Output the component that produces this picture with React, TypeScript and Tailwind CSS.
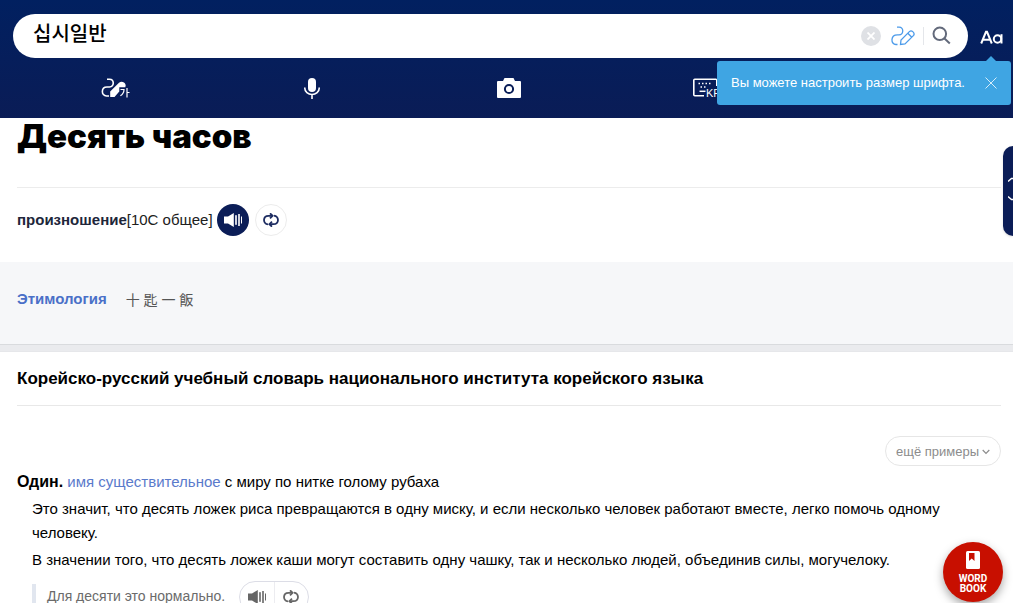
import React from "react";

type IconProps = { className?: string };

function SpeakerIcon({ className }: IconProps) {
  return (
    <svg viewBox="0 0 18 14" className={className} fill="currentColor" aria-hidden="true">
      <path d="M0 3.500h4L9.800 0v14L4 10.500H0z" />
      <rect x="11.200" y="2.200" width="1.600" height="9.600" />
      <rect x="14.200" y="1" width="1.600" height="12" />
      <rect x="17" y="3.500" width="1" height="7" />
    </svg>
  );
}

function RepeatIcon({ className }: IconProps) {
  return (
    <svg viewBox="0 0 16 14" className={className} fill="none" stroke="currentColor" strokeWidth="1.800" aria-hidden="true">
      <path d="M5 11.400A4.700 4.700 0 0 1 1 7Q1.200 2.800 5.500 2.800H9" />
      <path d="M11 2.600A4.700 4.700 0 0 1 15 7Q14.800 11.200 10.500 11.200H7" />
      <path d="M7 0.300 9.600 2.800 7 5.300" />
      <path d="M9 8.700 6.400 11.200 9 13.700" />
    </svg>
  );
}

function HandwritingIcon() {
  return (
    <svg viewBox="0 0 29 20" className="h-5 w-[29px]" aria-hidden="true">
      <path d="M6 1.200h2.500C13.500 1.200 13.500 9 8.500 9H6C-0.200 9 0 18 5.500 18H8" fill="none" stroke="#fff" strokeWidth="1.600" />
      <path d="M9.200 19v-5.500L18 4.800Q20.500 2.800 23 4.600 25.500 6.500 24.300 9.300H18.300v4.200L13.500 19z" fill="#fff" />
      <path d="M19.500 11.500h3.500q0 4-3.600 6.300M26 10v9.500M26 14.500h2.500" fill="none" stroke="#fff" strokeWidth="1.200" />
    </svg>
  );
}

function PenIcon() {
  return (
    <svg viewBox="0 0 24 20" className="h-5 w-6" fill="none" stroke="#4c9bea" strokeWidth="1.300" aria-hidden="true">
      <path d="M6 1.200h2C13.500 1.200 12.500 8.800 8 8.800H6.500C-0.800 8.800-0.500 18.500 5 18.500h1.500" />
      <path d="M9.500 18.500 10 14l8.600-8.600q1.600-1.200 3.400.5t.6 3.500L14 18z" />
      <path d="m16.800 7.200 4 4" />
    </svg>
  );
}

function MicIcon() {
  return (
    <svg viewBox="0 0 18 22" className="h-[22px] w-[18px]" aria-hidden="true">
      <rect x="5" y="1" width="8" height="14" rx="4" fill="#fff" />
      <path d="M1.800 10.500v.7a7.200 6.300 0 0 0 14.400 0v-.7M9 17.500V22" fill="none" stroke="#fff" strokeWidth="1.600" />
    </svg>
  );
}

function CameraIcon() {
  return (
    <svg viewBox="0 0 24 20" className="h-5 w-6" aria-hidden="true">
      <path d="M1 3h5l1.500-3h9L18 3h5q1 0 1 1v15q0 1-1 1H1q-1 0-1-1V4q0-1 1-1z" fill="#fff" />
      <circle cx="12" cy="11" r="4.100" fill="none" stroke="#091d57" strokeWidth="2" />
    </svg>
  );
}

function KeyboardIcon() {
  return (
    <svg viewBox="0 0 28 20" className="h-5 w-7" aria-hidden="true">
      <path d="M12 17.700H2.800q-1 0-1-1V2.300q0-1 1-1h21q1 0 1 1V8" fill="none" stroke="#fff" strokeWidth="1.600" />
      <path d="M6.500 5.500h14M8.500 9H15" stroke="#fff" strokeWidth="1.500" strokeDasharray="1.500 2" />
      <path d="M7.500 13.300h6" stroke="#fff" strokeWidth="1.500" />
      <text x="14" y="18.500" fontSize="11" fontFamily="Liberation Sans, sans-serif" fill="#fff">KR</text>
    </svg>
  );
}

const tools = [
  { label: "Рукописный ввод", icon: <HandwritingIcon /> },
  { label: "Голосовой ввод", icon: <MicIcon /> },
  { label: "Камера", icon: <CameraIcon /> },
  { label: "Клавиатура", icon: <KeyboardIcon /> },
];

function Header() {
  return (
    <header className="relative z-10 shrink-0 bg-linear-to-b from-[#012060] to-[#0a1c56] pt-[14px]">
      <div className="flex items-center pl-[13px]">
        <form className="flex h-11 min-w-0 flex-1 items-center rounded-full bg-white pr-4 pl-5" onSubmit={(e) => e.preventDefault()}>
          <input
            type="text"
            aria-label="Поиск"
            defaultValue="십시일반"
            className="mb-1 min-w-0 flex-1 bg-transparent text-xl leading-7 font-medium text-black outline-none"
          />
          <button type="reset" aria-label="Очистить" className="flex size-5 items-center justify-center rounded-full bg-[#dfe1e5]">
            <svg viewBox="0 0 8 8" className="size-2" stroke="#fff" strokeWidth="1.800" aria-hidden="true">
              <path d="m.5.5 7 7m0-7-7 7" />
            </svg>
          </button>
          <button type="button" aria-label="Рукописный ввод" className="ml-[10px]">
            <PenIcon />
          </button>
          <span className="ml-2 h-[18px] w-px bg-[#e4e6ea]" />
          <button type="submit" aria-label="Найти" className="ml-2">
            <svg viewBox="0 0 20 20" className="size-5" fill="none" stroke="#636a7b" strokeWidth="2" aria-hidden="true">
              <circle cx="7.800" cy="7.800" r="6.300" />
              <path d="m12.500 12.500 5.300 5" />
            </svg>
          </button>
        </form>
        <button type="button" aria-label="Размер шрифта" className="w-[45px] pl-[2px]">
          <svg viewBox="0 0 23 15" className="mx-auto mt-[2px] h-[15px] w-[23px]" fill="none" stroke="#fff" strokeWidth="2" aria-hidden="true">
            <path d="M1.200 13.500 6 1.800h1l4.800 11.700M3 9.700h7" />
            <ellipse cx="17.500" cy="9" rx="3.700" ry="3.700" />
            <path d="M21.500 4.200v9.300" />
          </svg>
        </button>
      </div>
      <nav className="grid h-[60px] grid-cols-5 pr-3 pl-[17px]">
        {tools.map((t) => (
          <button key={t.label} type="button" aria-label={t.label} className="flex items-center justify-center">
            {t.icon}
          </button>
        ))}
      </nav>
      <div role="tooltip" className="absolute top-[61px] right-[2px] flex h-11 w-[294px] items-center justify-between rounded-[3px] bg-[#3fa5e3] px-[14px] text-[13px] text-white">
        <span className="absolute -top-[5px] right-[15px] border-x-[5px] border-b-[5px] border-x-transparent border-b-[#3fa5e3]" />
        Вы можете настроить размер шрифта.
        <button type="button" aria-label="Закрыть">
          <svg viewBox="0 0 12 12" className="size-3" stroke="#d5ecfa" aria-hidden="true">
            <path d="m.5.5 11 11m0-11-11 11" />
          </svg>
        </button>
      </div>
    </header>
  );
}

export default function App() {
  return (
    <div className="relative flex h-screen flex-col overflow-hidden bg-white font-['Liberation_Sans','Noto_Sans_CJK_KR',sans-serif] text-black">
      <Header />
      <main className="min-h-0 flex-1">
        <section className="pr-3 pl-[17px]">
          <h1 className="h-[69px] font-['Inter'] text-[33px] leading-9 font-black">Десять часов</h1>
          <div className="flex h-[75px] items-center border-t border-[#ececec] pb-[10px] text-[15px] text-[#202020]">
            <p>
              <strong className="text-[#20263a]">произношение</strong>[10С общее]
            </p>
            <button type="button" aria-label="Прослушать" className="ml-1 flex size-8 items-center justify-center rounded-full bg-[#0b1d57] text-white">
              <SpeakerIcon className="h-[14px] w-[18px]" />
            </button>
            <button type="button" aria-label="Повтор" className="ml-[6px] flex size-8 items-center justify-center rounded-full border border-[#ececec] text-[#1d2c61]">
              <RepeatIcon className="h-[14px] w-4" />
            </button>
          </div>
        </section>

        <section className="flex h-[82px] items-center bg-[#f6f7f9] px-[17px] pb-2">
          <h2 className="text-[15px] font-bold text-[#4a70c8]">Этимология</h2>
          <p className="ml-[19px] pt-[2px] text-sm text-[#555]">十 匙 一 飯</p>
        </section>
        <div className="h-2 border-t border-b border-t-[#d9dbde] border-b-[#e6e7ea] bg-[#eaebee]" />

        <section className="pr-3 pl-[17px]">
          <h2 className="flex h-[54px] items-center border-b border-[#e8e8e8] text-[17px] font-bold">
            Корейско-русский учебный словарь национального института корейского языка
          </h2>
          <div className="mt-[30px] flex justify-end">
            <button type="button" className="flex h-[30px] items-center rounded-full border border-[#e6e6e6] px-[10px] pt-px text-[13px] text-[#8c8c8c]">
              ещё примеры
              <svg viewBox="0 0 8 6" className="ml-[3px] h-[6px] w-2" fill="none" stroke="#8c8c8c" strokeWidth="1.200" aria-hidden="true">
                <path d="m.7 1 3.300 3.300L7.300 1" />
              </svg>
            </button>
          </div>
          <p className="mt-1 text-[15px] leading-6">
            <strong className="text-base leading-6">Один.</strong> <span className="text-[#5a7acb]">имя существительное</span> с миру по нитке голому рубаха
          </p>
          <div className="mt-[3px] px-[15px] text-[15px] leading-6">
            <p>Это значит, что десять ложек риса превращаются в одну миску, и если несколько человек работают вместе, легко помочь одному человеку.</p>
            <p className="mt-[3px]">В значении того, что десять ложек каши могут составить одну чашку, так и несколько людей, объединив силы, могучелоку.</p>
            <div className="mt-[9px] flex items-start">
              <blockquote className="mt-[3px] border-l-4 border-[#e1e6ef] pl-[11px] text-sm leading-6 text-[#6b6b6b]">Для десяти это нормально.</blockquote>
              <div className="ml-[14px] flex h-8 w-[70px] shrink-0 rounded-full border border-[#dcdde6] text-[#666]">
                <button type="button" aria-label="Прослушать пример" className="flex flex-1 items-center justify-center border-r border-[#ececf0]">
                  <SpeakerIcon className="h-[14px] w-[18px]" />
                </button>
                <button type="button" aria-label="Повтор примера" className="flex flex-1 items-center justify-center">
                  <RepeatIcon className="h-[14px] w-4" />
                </button>
              </div>
            </div>
          </div>
        </section>
      </main>

      <button type="button" aria-label="Листать" className="absolute top-[146px] right-0 flex h-[90px] w-[10px] flex-col items-end justify-center rounded-l-[10px] bg-[#0b1d57] pb-1 shadow">
        <svg viewBox="0 0 5 24" className="h-6 w-[5px]" fill="none" stroke="#fff" strokeWidth="1.400" aria-hidden="true">
          <path d="M0 4.500 3.500 1.500H5M0 19.500l3.500 3H5" />
        </svg>
      </button>
      <button type="button" className="absolute right-[10px] bottom-[1px] flex size-[60px] flex-col items-center rounded-full bg-[#c80f00] pt-[9px] font-['Roboto'] text-[10px] leading-[10px] font-bold text-white shadow-[0_4px_10px_rgba(0,0,0,0.35)]">
        <svg viewBox="0 0 14 18" className="mb-[5px] h-[18px] w-[14px]" aria-hidden="true">
          <rect width="14" height="18" rx="1.500" fill="#fff" />
          <path d="M3 2h5.500v8L5.700 7.500 3 10z" fill="#c80f00" />
        </svg>
        <span>
          WORD
          <br />
          BOOK
        </span>
      </button>
    </div>
  );
}
